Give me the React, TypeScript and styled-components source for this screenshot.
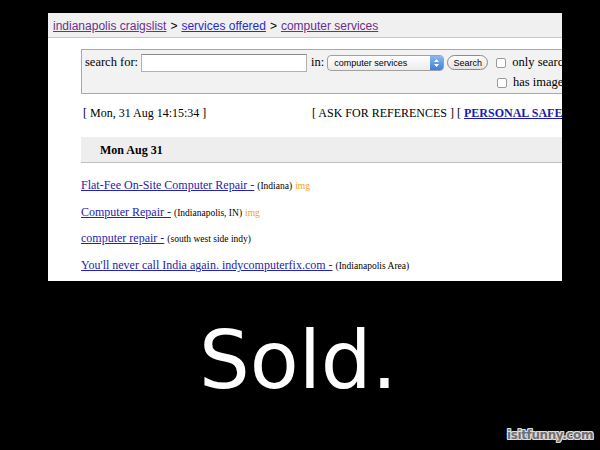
import React from "react";
import styled, { createGlobalStyle } from "styled-components";

const Global = createGlobalStyle`
  html, body { margin: 0; padding: 0; background: #000; }
  body { width: 600px; height: 450px; overflow: hidden; }
`;

const Stage = styled.div`
  width: 600px;
  height: 450px;
  background: #000;
  display: flex;
  flex-direction: column;
  align-items: flex-start;
  position: relative;
`;

const Shot = styled.div`
  margin-top: 13px;
  margin-left: 48px;
  width: 514px;
  height: 268px;
  background: #fff;
  overflow: hidden;
  font-family: "Liberation Serif", "Times New Roman", serif;
  color: #000;
`;

const Crumbs = styled.div`
  height: 23px;
  background: #f0f0f0;
  border-bottom: 1px solid #c8c8c8;
  display: flex;
  align-items: center;
  padding-left: 5px;
  padding-top: 1px;
  font-family: "Liberation Sans", Arial, sans-serif;
  font-size: 12px;
  white-space: nowrap;
`;

const Crumb = styled.a<{ $visited?: boolean }>`
  color: ${(p) => (p.$visited ? "#6b2f8f" : "#2a2ad0")};
  text-decoration: underline;
`;

const Sep = styled.span`
  margin: 0 4px;
  color: #000;
`;

const SearchBox = styled.div`
  margin: 11px 0 0 33px;
  width: 520px;
  background: #f2f2f2;
  border: 1px solid #a8a8a8;
  display: grid;
  padding: 3px 0 0 3px;
  box-sizing: border-box;
  height: 45px;
  font-size: 12.5px;
`;

const SearchRow = styled.div<{ $indent?: number }>`
  display: flex;
  align-items: center;
  height: 19px;
  white-space: nowrap;
  padding-left: ${(p) => p.$indent || 0}px;
`;

const Label = styled.span`
  margin-right: 3px;
`;

const TextInput = styled.div`
  width: 164px;
  height: 16px;
  background: #fff;
  border: 1px solid #b0b0b0;
  border-top-color: #8a8a8a;
  margin-right: 4px;
`;

const Select = styled.div`
  width: 109px;
  height: 14px;
  border: 1px solid #a0a0a0;
  border-radius: 4px;
  background: linear-gradient(#fff, #ececec);
  display: flex;
  align-items: center;
  justify-content: space-between;
  padding-left: 6px;
  box-sizing: content-box;
  font-family: "Liberation Sans", Arial, sans-serif;
  font-size: 9px;
  overflow: hidden;
  margin-right: 3px;
`;

const SelArrow = styled.div`
  width: 13px;
  height: 14px;
  background: linear-gradient(#8ab8f0, #3c7fdc);
  display: flex;
  align-items: center;
  justify-content: center;
`;

const Button = styled.div`
  height: 13px;
  width: 29px;
  padding: 0 5px;
  border: 1px solid #8a8a8a;
  border-radius: 8px;
  background: linear-gradient(#fff, #e4e4e4);
  font-family: "Liberation Sans", Arial, sans-serif;
  font-size: 9px;
  display: flex;
  align-items: center;
  justify-content: center;
  margin-right: 8px;
`;

const Check = styled.div`
  width: 8px;
  height: 8px;
  border: 1px solid #9a9a9a;
  border-radius: 2px;
  background: #fff;
  margin-right: 6px;
  flex-shrink: 0;
`;

const InfoRow = styled.div`
  display: flex;
  margin: 11px 0 0 35px;
  font-size: 12px;
  white-space: nowrap;
  height: 16px;
  align-items: center;
`;

const Stamp = styled.span`
  width: 229px;
  flex-shrink: 0;
`;

const SafeLink = styled.a`
  color: #1a1ab0;
  font-weight: bold;
  text-decoration: underline;
`;

const DateBand = styled.div`
  margin: 16px 0 0 33px;
  height: 26px;
  background: #eeeeee;
  border-bottom: 1px solid #c0c0c0;
  display: flex;
  align-items: center;
  padding-left: 19px;
  padding-top: 1px;
  box-sizing: border-box;
  font-weight: bold;
  font-size: 12px;
`;

const List = styled.div`
  margin: 15px 0 0 33px;
  display: flex;
  flex-direction: column;
  gap: 10.6px;
`;

const Row = styled.div`
  display: flex;
  align-items: baseline;
  height: 16px;
  white-space: nowrap;
`;

const PostLink = styled.a`
  color: #2424b0;
  text-decoration: underline;
  font-size: 12px;
`;

const Loc = styled.span`
  font-size: 9.5px;
  margin-left: 3px;
`;

const Img = styled.span`
  font-size: 9.5px;
  margin-left: 3px;
  color: #f0a030;
`;

const Caption = styled.div`
  align-self: center;
  margin-top: 32px;
  margin-left: -4px;
  font-family: "DejaVu Sans", Verdana, sans-serif;
  font-size: 80px;
  line-height: 96px;
  color: #fff;
`;

const Watermark = styled.div`
  position: absolute;
  right: 7px;
  bottom: 8px;
  font-family: "DejaVu Sans", Verdana, sans-serif;
  font-weight: bold;
  font-size: 12px;
  letter-spacing: -0.4px;
  color: #6f6f6f;
  text-shadow: -1px -1px 0 #ddd, 1px -1px 0 #ddd, -1px 1px 0 #ddd, 1px 1px 0 #ddd,
    0 1px 0 #ddd, 0 -1px 0 #ddd, 1px 0 0 #ddd, -1px 0 0 #ddd;
`;

const listings = [
  { title: "Flat-Fee On-Site Computer Repair -", loc: "(Indiana)", img: true },
  { title: "Computer Repair -", loc: "(Indianapolis, IN)", img: true },
  { title: "computer repair -", loc: "(south west side indy)", img: false },
  { title: "You'll never call India again. indycomputerfix.com -", loc: "(Indianapolis Area)", img: false },
];

export default function App() {
  return (
    <Stage>
      <Global />
      <Shot>
        <Crumbs>
          <Crumb $visited>indianapolis craigslist</Crumb>
          <Sep>&gt;</Sep>
          <Crumb>services offered</Crumb>
          <Sep>&gt;</Sep>
          <Crumb $visited>computer services</Crumb>
        </Crumbs>
        <SearchBox>
          <SearchRow>
            <Label>search for:</Label>
            <TextInput />
            <Label>in:</Label>
            <Select>
              <span>computer services</span>
              <SelArrow>
                <svg width="7" height="10" viewBox="0 0 7 10">
                  <path d="M1 4 L3.5 1 L6 4 Z M1 6 L3.5 9 L6 6 Z" fill="#fff" />
                </svg>
              </SelArrow>
            </Select>
            <Button>Search</Button>
            <Check />
            <span>only search titles</span>
          </SearchRow>
          <SearchRow $indent={412}>
            <Check />
            <span>has image</span>
          </SearchRow>
        </SearchBox>
        <InfoRow>
          <Stamp>[ Mon, 31 Aug 14:15:34 ]</Stamp>
          <span>
            [ ASK FOR REFERENCES ] [ <SafeLink>PERSONAL SAFETY TIPS</SafeLink> ]
          </span>
        </InfoRow>
        <DateBand>Mon Aug 31</DateBand>
        <List>
          {listings.map((l) => (
            <Row key={l.title}>
              <PostLink>{l.title}</PostLink>
              <Loc>{l.loc}</Loc>
              {l.img && <Img>img</Img>}
            </Row>
          ))}
        </List>
      </Shot>
      <Caption>Sold.</Caption>
      <Watermark>isitfunny.com</Watermark>
    </Stage>
  );
}
